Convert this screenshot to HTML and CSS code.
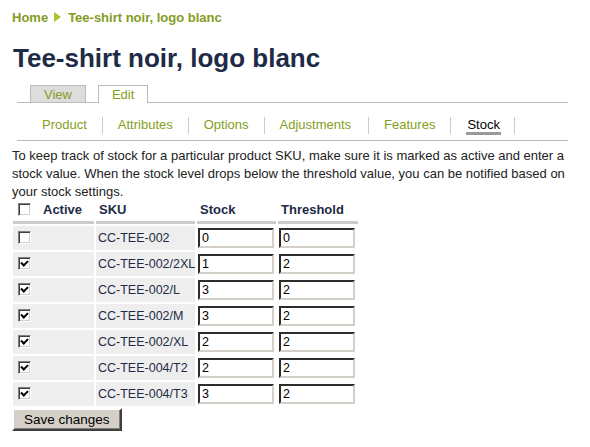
FILE: index.html
```html
<!DOCTYPE html>
<html>
<head>
<meta charset="utf-8">
<link rel="stylesheet" href="styles.css">
</head>
<body>
<div class="page">
  <div class="breadcrumb"><a href="#">Home</a><span class="arrow"></span><a href="#">Tee-shirt noir, logo blanc</a></div>
  <h1 class="title">Tee-shirt noir, logo blanc</h1>
  <ul class="tabs">
    <li class="tab"><a href="#">View</a></li>
    <li class="tab active"><a href="#">Edit</a></li>
  </ul>
  <ul class="subtabs">
    <li><a href="#">Product</a></li>
    <li><a href="#">Attributes</a></li>
    <li><a href="#">Options</a></li>
    <li><a href="#">Adjustments</a></li>
    <li><a href="#">Features</a></li>
    <li class="active"><a href="#">Stock</a></li>
  </ul>
  <p class="intro">To keep track of stock for a particular product SKU, make sure it is marked as active and enter a stock value. When the stock level drops below the threshold value, you can be notified based on your stock settings.</p>
  <form class="stock-form">
    <table class="stock">
      <thead>
        <tr>
          <th class="c-active"><span class="cb"></span><span class="lbl">Active</span></th>
          <th class="c-sku">SKU</th>
          <th class="c-stock">Stock</th>
          <th class="c-thr">Threshold</th>
        </tr>
      </thead>
      <tbody>
        <tr><td class="c-active"><span class="cb"></span></td><td class="c-sku">CC-TEE-002</td><td class="c-stock"><input value="0"></td><td class="c-thr"><input value="0"></td></tr>
        <tr><td class="c-active"><span class="cb on"></span></td><td class="c-sku">CC-TEE-002/2XL</td><td class="c-stock"><input value="1"></td><td class="c-thr"><input value="2"></td></tr>
        <tr><td class="c-active"><span class="cb on"></span></td><td class="c-sku">CC-TEE-002/L</td><td class="c-stock"><input value="3"></td><td class="c-thr"><input value="2"></td></tr>
        <tr><td class="c-active"><span class="cb on"></span></td><td class="c-sku">CC-TEE-002/M</td><td class="c-stock"><input value="3"></td><td class="c-thr"><input value="2"></td></tr>
        <tr><td class="c-active"><span class="cb on"></span></td><td class="c-sku">CC-TEE-002/XL</td><td class="c-stock"><input value="2"></td><td class="c-thr"><input value="2"></td></tr>
        <tr><td class="c-active"><span class="cb on"></span></td><td class="c-sku">CC-TEE-004/T2</td><td class="c-stock"><input value="2"></td><td class="c-thr"><input value="2"></td></tr>
        <tr><td class="c-active"><span class="cb on"></span></td><td class="c-sku">CC-TEE-004/T3</td><td class="c-stock"><input value="3"></td><td class="c-thr"><input value="2"></td></tr>
      </tbody>
    </table>
    <button type="button" class="save">Save changes</button>
  </form>
</div>
</body>
</html>
```
FILE: styles.css
```css
* { box-sizing: border-box; }
html, body { margin: 0; padding: 0; background: #fff; }
body {
  font-family: "Liberation Sans", Arial, sans-serif;
  font-size: 13px;
  color: #222;
}
.page { padding: 10px 22px 0 12px; }
a { text-decoration: none; color: #7f9a1a; }

.breadcrumb {
  font-size: 13px;
  font-weight: bold;
  line-height: 16px;
  height: 16px;
  display: flex;
  align-items: center;
}
.breadcrumb a { color: #839c1f; }
.breadcrumb .arrow {
  display: inline-block;
  width: 0; height: 0;
  border-left: 7px solid #a6c62e;
  border-top: 5px solid transparent;
  border-bottom: 5px solid transparent;
  margin: -3px 7px 0 6px;
}

.title {
  margin: 15px 0 0 1px;
  font-size: 26px;
  line-height: 34px;
  font-weight: bold;
  color: #1e2b45;
}

.tabs {
  list-style: none;
  margin: 10px 0 0 5px;
  padding: 0 0 0 13px;
  display: flex;
  gap: 12px;
  border-bottom: 1px solid #bbb;
  height: 18px;
  align-items: flex-end;
}
.tab {
  height: 17px;
  border: 1px solid #bbb;
  border-bottom: none;
  background: #ddd;
  font-size: 13px;
  line-height: 17px;
  padding: 0 13px;
}
.tab a { color: #84a020; }
.tab.active {
  background: #fff;
  height: 18px;
  margin-bottom: -1px;
  padding: 0 13px;
}

.subtabs {
  list-style: none;
  margin: 0 0 0 5px;
  padding: 14px 0 6px 14px;
  display: flex;
  border-bottom: 1px solid #bbb;
  font-size: 13px;
  line-height: 16px;
}
.subtabs li {
  padding: 0 15px;
  border-left: 1px solid #ccc;
  height: 17px;
}
.subtabs li:first-child { border-left: none; padding-left: 11px; }
.subtabs li:last-child { border-right: 1px solid #ccc; padding-right: 13px; }
.subtabs li:nth-child(4) { padding-right: 17px; }
.subtabs a { color: #84a020; }
.subtabs li.active a {
  color: #000;
  display: inline-block;
  border-bottom: 3px solid #999;
  padding: 0 1px;
  line-height: 15px;
}

.intro {
  margin: 6px 0 0 0;
  line-height: 18px;
  color: #222;
}

.stock-form { margin-top: 0; }
.stock {
  border-collapse: separate;
  border-spacing: 2px;
  margin-left: -1px;
  margin-top: -1px;
  table-layout: fixed;
  width: 349px;
}
.stock th {
  text-align: left;
  font-weight: bold;
  color: #1e2b45;
  font-size: 13px;
  line-height: 16px;
  padding: 0 3px 3px 3px;
  border-bottom: 3px solid #ccc;
  height: 22px;
  vertical-align: top;
  white-space: nowrap;
}
.stock td {
  background: #eee;
  height: 24px;
  padding: 0 0 0 2px;
  color: #1e2b45;
  font-size: 12.5px;
  white-space: nowrap;
}
.c-active { width: 81px; padding-left: 5px !important; }
.c-sku { width: 99px; }
.c-stock { width: 79px; }
.c-thr { width: 80px; }
.stock th .lbl { margin-left: 12px; }
.stock td.c-stock, .stock td.c-thr { background: #fff; padding: 0 1px; }

.cb {
  display: inline-block;
  width: 13px; height: 13px;
  border: 1px solid;
  border-color: #808080 #fff #fff #808080;
  box-shadow: inset 1px 1px 0 #404040, inset -1px -1px 0 #d4d0c8;
  background: #fff;
  vertical-align: -2px;
  position: relative;
}
.cb.on::after {
  content: "";
  position: absolute;
  width: 5px; height: 3px;
  border-left: 2px solid #000;
  border-bottom: 2px solid #000;
  transform: rotate(-45deg);
  left: 2px; top: 2px;
}

.stock input {
  width: 76px;
  height: 20px;
  border: 2px inset #d4d0c8;
  border-color: #808080 #d4d0c8 #d4d0c8 #808080;
  font-family: "Liberation Sans", Arial, sans-serif;
  font-size: 12.5px;
  padding: 0 2px;
  color: #000;
  display: block;
}

.save {
  margin: 0;
  height: 23px;
  padding: 0 10px;
  font-family: "Liberation Sans", Arial, sans-serif;
  font-size: 13.5px;
  background: #d4d0c8;
  color: #000;
  border: 2px solid;
  border-color: #fff #404040 #404040 #fff;
  box-shadow: inset -1px -1px 0 #808080;
}
```
